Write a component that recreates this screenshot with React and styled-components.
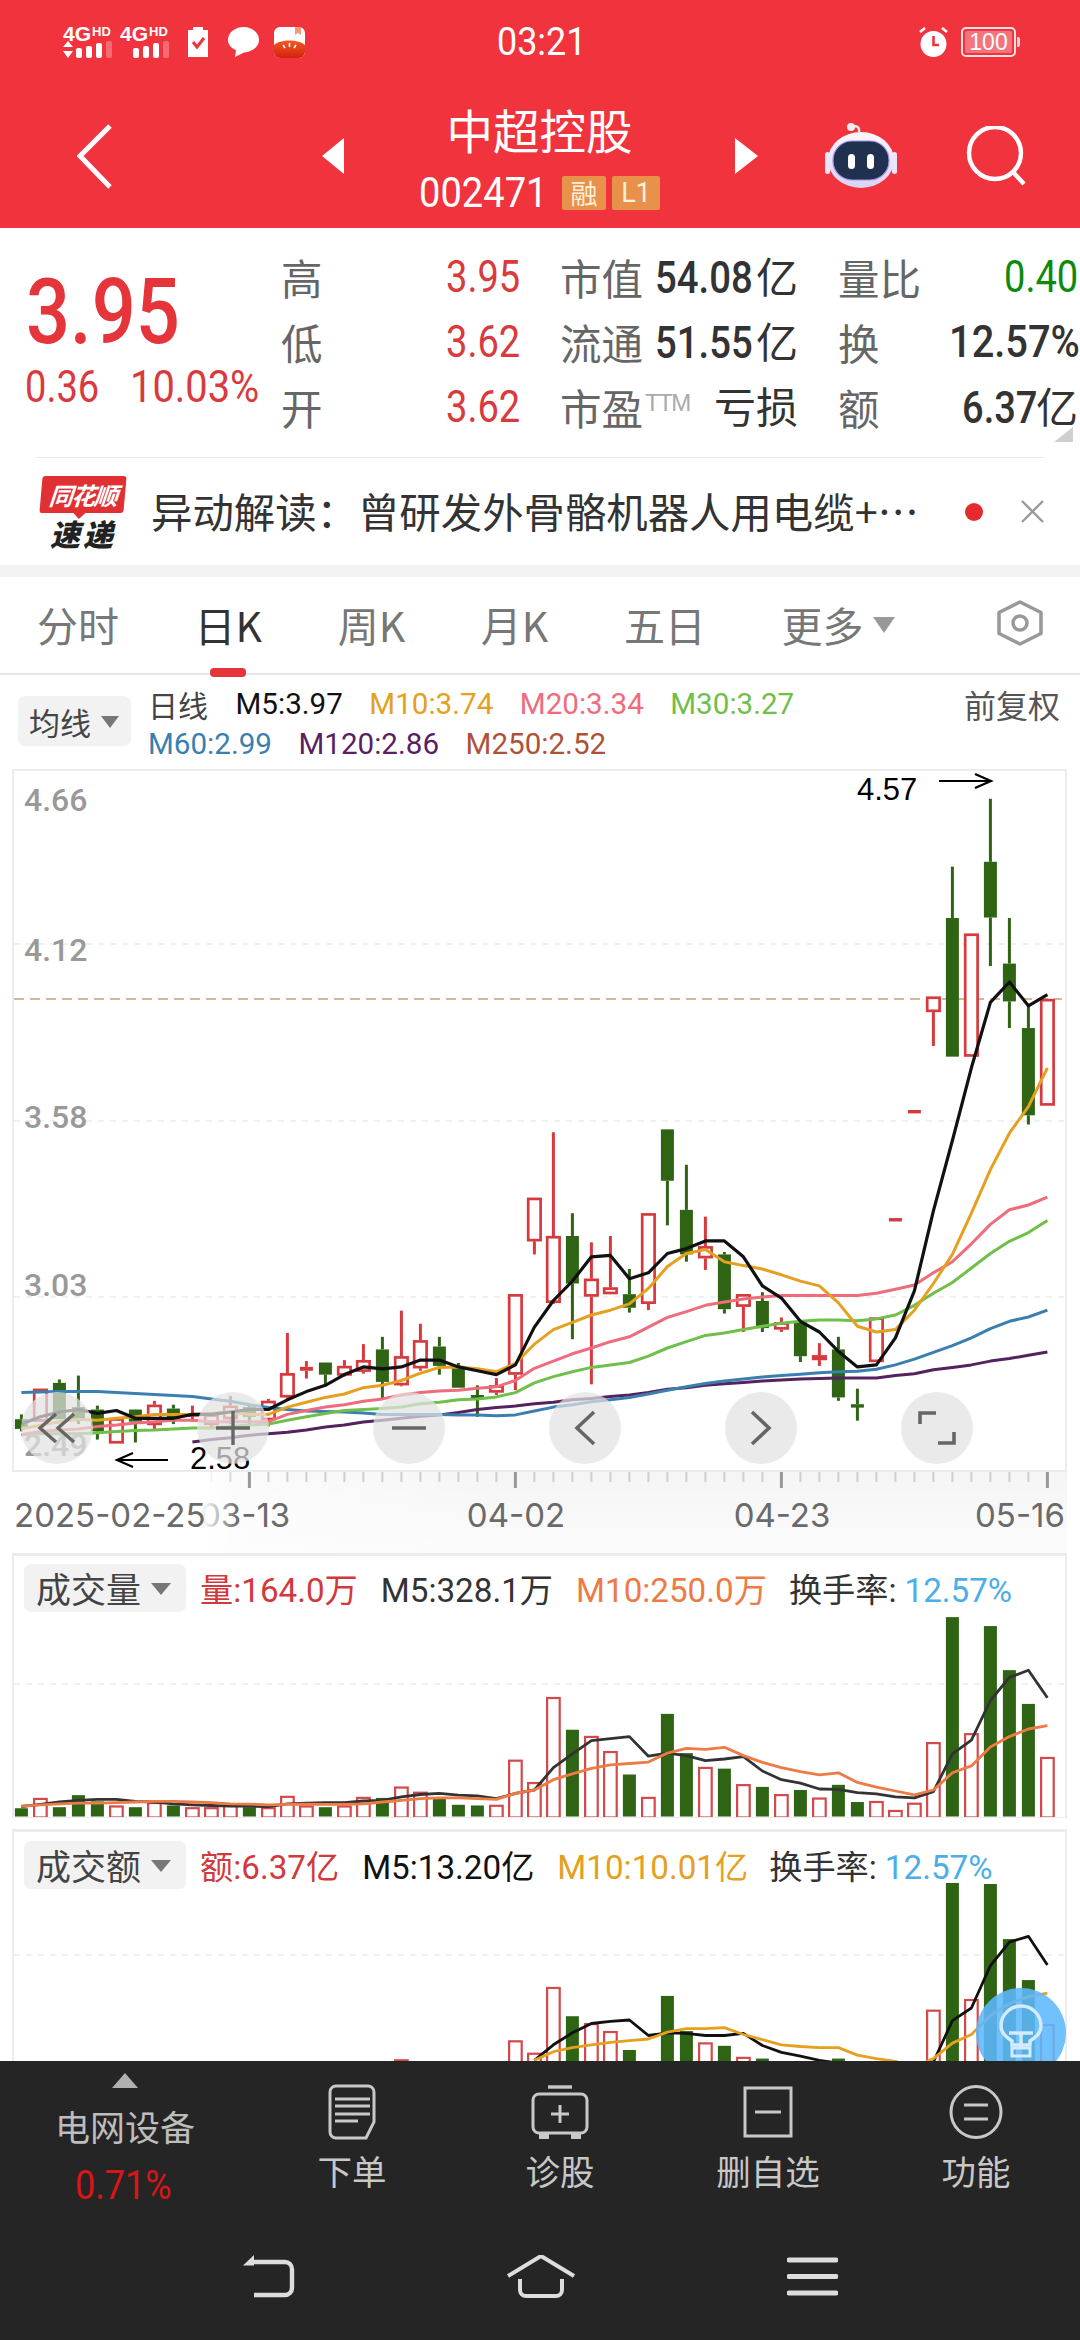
import React from "react";
import styled, { createGlobalStyle } from "styled-components";

const SANS = `"Roboto","Noto Sans CJK SC",sans-serif`;
const CJK = `"Noto Sans CJK SC",sans-serif`;
const RED = "#f0333d";

const Global = createGlobalStyle`
  html, body { margin: 0; padding: 0; background: #fff; }
  body { font-family: ${SANS}; }
  * { box-sizing: border-box; }
`;

const Page = styled.div`
  width: 1080px; height: 2340px; overflow: hidden; position: relative;
  display: flex; flex-direction: column; background: #fff;
`;
/* condensed digits: the layout box has the target width, the glyphs are squeezed into it */
const Sq = styled.span`
  display: inline-block; width: ${p => p.$w}px; white-space: nowrap; text-align: left;
  transform: scaleX(${p => p.$s}); transform-origin: left center;
`;
const Unit = styled.span`font-family: ${CJK}; font-size: 42px; font-weight: 400;`;

const Header = styled.header`
  height: 228px; background: ${RED}; color: #fff; flex: none;
  display: flex; flex-direction: column;
`;
const StatusBar = styled.div`
  height: 84px; display: grid; grid-template-columns: 1fr auto 1fr; align-items: center;
  padding: 0 60px 0 63px;
`;
const StatusLeft = styled.div`display: flex; align-items: center; gap: 0;`;
const StatusRight = styled.div`display: flex; align-items: center; justify-content: flex-end; gap: 13px;`;
const Clock = styled.div`font-size: 39px; line-height: 44px; margin-top: -1px;`;
const Net = styled.div`
  width: 57px; height: 32px; display: flex; flex-direction: column; font-weight: 700;
`;
const NetTop = styled.div`display: flex; height: 15px; line-height: 15px; font-size: 21px; font-family: "Liberation Sans",sans-serif;`;
const Hd = styled.span`font-size: 13px; line-height: 11px; margin-left: 1px;`;
const StatusGlyph = styled.svg`display: block; flex: none; margin-left: ${p => p.$ml || 0}px;`;

const TitleBar = styled.div`flex: 1; display: flex; align-items: center; padding-left: 77px;`;
const Icon = styled.svg`display: block; flex: none; margin-left: ${p => p.$ml || 0}px;`;
const TitleBlock = styled.div`width: 391px; flex: none; display: flex; flex-direction: column; align-items: center; gap: 21px;`;
const Title = styled.div`font-size: 46.5px; line-height: 52px; font-family: ${CJK};`;
const CodeRow = styled.div`display: flex; align-items: center; height: 34px;`;
const Code = styled.span`font-size: 42px; line-height: 34px; margin-right: 15px;`;
const Badge = styled.span`
  height: 34px; width: ${p => p.$w}px; margin-right: 6px; background: #e8914a; border-radius: 2px;
  display: flex; align-items: center; justify-content: center; font-size: ${p => p.$fs}px; color: #fdf1dd;
  &:last-child { margin-right: 0; }
`;

const Info = styled.section`
  height: 230px; flex: none; position: relative; display: flex; padding-top: 16px;
  &::after { content: ""; position: absolute; left: 36px; right: 36px; bottom: 0; height: 1px; background: #e9e9e9; }
`;
const Corner = styled.div`
  position: absolute; right: 7px; bottom: 16px; width: 0; height: 0;
  border-left: 19px solid transparent; border-bottom: 15px solid #cfcfcf;
`;
const PriceBlock = styled.div`width: 281px; flex: none; padding-left: 25px; display: flex; flex-direction: column;`;
const BigPrice = styled.div`
  font-size: 91px; font-weight: 500; line-height: 88px; color: #e5343a; margin-top: 24px; padding-left: 1px;
`;
const Change = styled.div`
  display: flex; gap: 31px; font-size: 44px; line-height: 44px; color: #d93a3e; margin-top: 9px;
`;
const Table = styled.div`
  flex: none; width: 797px; display: grid; grid-template-columns: 60px 179px 135px 143px 127px 153px; grid-auto-rows: 65px; align-items: center;
`;
const Label = styled.div`
  font-size: 41.5px; color: #666; font-family: ${CJK}; white-space: nowrap;
  padding-left: ${p => p.$pl || 0}px; line-height: 50px;
`;
const Sup = styled.sup`font-family: "Liberation Sans",sans-serif; font-size: 24px; line-height: 0; vertical-align: 14px; color: #aaa; margin-left: 2px; letter-spacing: -1.5px;`;
const Value = styled.div`
  font-size: 44px; font-weight: ${p => p.$fw || 400}; color: ${p => p.$c || "#333"}; text-align: right; line-height: 50px; white-space: nowrap;
`;

const News = styled.div`height: 107px; flex: none; display: flex; align-items: center; padding-left: 38px;`;
const Logo = styled.div`width: 90px; flex: none; display: flex; flex-direction: column; align-items: center; margin-top: 0;`;
const LogoBubble = styled.div`
  position: relative; width: 84px; height: 37px; background: #e03034; border-radius: 3px; transform: skewX(-5deg);
  color: #fff; font: italic 700 24px/37px ${CJK}; text-align: center; letter-spacing: -1.5px;
  &::after { content: ""; position: absolute; left: 34px; bottom: -6px; border-left: 6px solid transparent; border-right: 6px solid transparent; border-top: 6px solid #e03034; }
`;
const LogoText = styled.div`font: italic 900 30px/30px ${CJK}; color: #222; margin-top: 5px; letter-spacing: 3px;`;
const NewsText = styled.div`
  font-family: ${CJK}; font-size: 41.4px; line-height: 52px; color: #333; margin-left: 23px; width: 780px; white-space: nowrap; margin-top: -3px;
`;
const Dot = styled.div`width: 18px; height: 18px; border-radius: 50%; background: #e62a2e; margin-left: 34px; flex: none;`;
const Separator = styled.div`height: 12px; flex: none; background: #f3f3f3;`;

const Tabs = styled.nav`
  height: 98px; flex: none; display: flex; align-items: center; gap: 75.6px; padding: 0 36px 0 37px; border-bottom: 2px solid #e6e6e6;
`;
const Tab = styled.div`
  position: relative; font-family: ${CJK}; font-size: 41px; line-height: 52px; color: ${p => p.$active ? "#333" : "#777"}; display: flex; align-items: center; margin-top: -3px;
  ${p => p.$active && `&::after { content: ""; position: absolute; left: 15px; bottom: -27px; width: 36px; height: 9px; background: #e5343a; border-radius: 4px; }`}
`;
const Caret = styled.span`
  width: 0; height: 0; margin-left: ${p => p.$ml || 10}px; margin-top: ${p => p.$mt || 2}px;
  border-left: ${p => p.$w}px solid transparent; border-right: ${p => p.$w}px solid transparent; border-top: ${p => p.$h}px solid ${p => p.$c || "#999"};
`;
const Gear = styled.svg`display: block; margin-left: auto; flex: none; margin-top: -4px;`;

const Indicators = styled.div`height: 94px; flex: none; display: flex; padding: 21px 20px 0 18px;`;
const Select = styled.div`
  height: ${p => p.$h}px; width: ${p => p.$wd}px; flex: none; background: #f2f2f2; border-radius: 7px; display: flex; align-items: center;
  padding-left: ${p => p.$pl}px; font-family: ${CJK}; font-size: ${p => p.$fs}px; color: #444;
`;
const LegendCol = styled.div`flex: 1; margin-left: 17px; margin-top: -12px; display: flex; flex-direction: column;`;
const LegendLine = styled.div`height: 40px; display: flex; align-items: center; gap: 26.5px; font-size: 29.6px;`;
const Ma = styled.span`color: ${p => p.$c}; white-space: nowrap; ${p => p.$cjk && `font-size: 30px; font-family: ${CJK}; color:#444; margin-right:1px;`}`;
const Adjust = styled.span`margin-left: auto; font-family: ${CJK}; font-size: 32px; color: #555;`;

const ChartFrame = styled.div`
  height: 703px; flex: none; margin: 0 13px 0 12px; border: 2px solid #ececec; position: relative; background:#fff;
`;
const ChartSvg = styled.svg`display: block; overflow: visible;`;
const Fabs = styled.div`position: absolute; left: 7px; top: 621px; display: flex; gap: 104px;`;
const Fab = styled.div`
  width: 72px; height: 72px; border-radius: 50%; background: rgba(226,226,226,.72); display: flex; align-items: center; justify-content: center;
`;
const Axis = styled.div`
  height: 81px; flex: none; margin: 0 13px 0 12px; background: #f5f5f5;
`;
const Panel = styled.div`
  height: ${p => p.$h}px; flex: none; position: relative; overflow: hidden; margin: 0 13px 0 12px; background: #fff;
  border: 2px solid #ececec; border-top-width: 3px; ${p => p.$open ? "border-bottom: 0;" : "border-bottom-width: 1px;"} margin-top: ${p => p.$mt || 0}px;
`;
const PanelLegend = styled.div`
  position: absolute; left: 10px; top: ${p => p.$top}px; display: flex; align-items: center; font-size: 33.2px; white-space: nowrap;
`;
const LegendItem = styled.span`
  color: ${p => p.$c}; margin-left: ${p => p.$ml}px; font-family: ${SANS};
`;

const Bottom = styled.footer`
  position: relative; z-index: 2; flex: none; height: 279px; background: #252525; color: #c8c8c8; display: flex; flex-direction: column;
`;
const BottomTop = styled.div`height: 194px; display: grid; grid-template-columns: 248px repeat(4, 208px);`;
const Sector = styled.div`display: flex; flex-direction: column; align-items: center; padding-top: 12px; padding-left: 2px;`;
const Up = styled.div`width: 0; height: 0; border-left: 13px solid transparent; border-right: 13px solid transparent; border-bottom: 15px solid #b0b0b0;`;
const SectorName = styled.div`font-family: ${CJK}; font-size: 35px; line-height: 44px; margin-top: 16px; color: #bdbdbd;`;
const SectorPct = styled.div`font-size: 40px; line-height: 44px; margin-top: 16px; color: #d81616;`;
const Action = styled.div`display: flex; flex-direction: column; align-items: center; padding-top: 23px;`;
const ActionLabel = styled.div`font-family: ${CJK}; font-size: 34.5px; line-height: 44px; margin-top: 8px;`;
const SysNav = styled.div`display: flex; gap: 211px; padding-left: 243px; align-items: center; height: 43px;`;
const Bulb = styled.svg`position: absolute; left: 976px; top: 1988px; z-index: 1;`;

const X = i => 21.4 + 19 * i;
const Y = v => 760 + v / 2.063;
const VY = v => 1530 + v / 2.904;

const G = "#2f6414", R = "#d63a3e";
const candles = [
  [G,1350,1360,1380,1385],[R,1297,1297,1365,1365],[G,1278,1285,1360,1360],[G,1270,1335,1360,1370],[G,1332,1340,1385,1402],
  [R,1358,1358,1410,1410],[G,1340,1340,1365,1408],[R,1322,1330,1372,1380],[G,1330,1338,1360,1370],[R,1332,1348,1352,1365],
  [R,1345,1350,1372,1380],[R,1312,1332,1360,1370],[G,1330,1335,1355,1370],[R,1318,1322,1362,1375],[R,1182,1265,1315,1320],
  [R,1240,1252,1260,1276],[G,1243,1243,1268,1292],[R,1238,1250,1270,1272],[R,1205,1238,1262,1266],[G,1190,1216,1283,1318],
  [R,1136,1230,1290,1292],[R,1163,1197,1255,1260],[G,1190,1210,1250,1268],[G,1244,1250,1295,1295],[G,1290,1310,1313,1355],
  [R,1275,1290,1305,1310],[R,1102,1102,1268,1300],[R,903,903,993,1020],[R,768,982,1120,1122],[G,935,982,1080,1195],
  [R,995,1070,1107,1288],[R,982,1088,1102,1102],[G,1050,1102,1130,1140],[R,935,935,1122,1135],[G,762,762,868,960],
  [G,835,928,1020,1035],[R,942,1003,1028,1052],[G,1015,1020,1133,1142],[R,1102,1102,1128,1180],[G,1098,1116,1172,1180],
  [R,1150,1160,1175,1180],[G,1160,1160,1230,1242],[R,1203,1228,1238,1250],[G,1190,1216,1315,1322],[G,1297,1329,1333,1363],
  [R,1150,1150,1242,1242],[R,945,945,952,952],[R,722,722,729,729],[R,488,488,520,590],[G,220,326,612,612],
  [R,358,358,612,612],[G,80,210,325,425],[G,326,420,498,553],[G,505,553,733,752],[R,493,493,713,713],
];
const m5 = [1370,1355,1345,1340,1348,1342,1358,1358,1358,1350,1350,1345,1340,1340,1320,1303,1290,1268,1252,1256,1252,1238,1238,1252,1260,1268,1248,1170,1115,1075,1025,1022,1070,1058,1018,1008,992,992,1025,1085,1110,1158,1180,1220,1252,1248,1192,1095,930,785,635,500,458,507,484];
const m10 = [1380,1372,1365,1360,1362,1358,1355,1350,1350,1350,1348,1345,1350,1350,1335,1325,1315,1308,1295,1290,1280,1265,1253,1252,1256,1262,1245,1205,1175,1160,1145,1135,1122,1090,1045,1018,1010,1035,1043,1050,1062,1075,1085,1120,1168,1180,1175,1135,1080,1020,935,845,770,715,635];
const m20 = [1392,1385,1382,1380,1375,1372,1368,1365,1362,1362,1365,1365,1365,1365,1350,1342,1335,1330,1323,1318,1310,1305,1302,1300,1296,1293,1280,1255,1240,1225,1213,1200,1190,1170,1150,1138,1125,1118,1112,1108,1105,1105,1105,1105,1105,1100,1092,1083,1058,1035,998,958,928,918,902];
const m30 = [1392,1390,1390,1390,1388,1385,1383,1382,1380,1378,1378,1375,1372,1370,1362,1355,1348,1342,1340,1338,1335,1328,1325,1320,1318,1314,1305,1285,1272,1262,1253,1248,1243,1230,1213,1200,1187,1182,1175,1168,1162,1158,1155,1155,1157,1153,1145,1125,1100,1078,1048,1018,993,975,950];
const m60 = [1305,1304,1303,1303,1303,1305,1307,1309,1311,1313,1318,1323,1330,1336,1340,1343,1344,1345,1347,1350,1350,1350,1350,1351,1351,1353,1351,1343,1335,1330,1324,1320,1315,1308,1300,1293,1286,1281,1277,1273,1270,1267,1264,1262,1261,1257,1248,1236,1222,1208,1192,1173,1158,1149,1135];
const m120 = [null,null,null,null,null,null,null,null,null,1407,1402,1398,1393,1390,1387,1382,1376,1372,1366,1362,1358,1354,1351,1346,1340,1336,1333,1328,1325,1320,1317,1313,1310,1305,1298,1295,1290,1287,1284,1281,1279,1277,1276,1275,1275,1275,1270,1266,1258,1253,1248,1240,1235,1228,1221];

const volTops = [808,778,805,770,788,800,805,790,800,805,805,798,805,805,772,800,805,800,775,778,745,760,780,798,800,798,667,732,485,580,598,642,710,775,534,648,688,693,738,746,767,755,777,740,790,787,813,792,616,253,590,279,407,505,659];
const volM5 = [803,797,790,785,782,782,788,790,795,798,800,802,802,803,795,793,792,792,787,785,775,768,765,770,772,780,765,755,690,650,612,606,600,657,648,655,670,665,658,700,725,735,752,753,763,766,775,778,760,650,610,495,428,407,487];
const volM10 = [802,798,795,793,793,792,790,788,788,790,792,795,796,798,797,796,797,797,795,790,785,780,778,778,780,782,765,755,725,708,692,682,678,674,648,634,637,631,655,675,690,702,711,705,733,747,758,769,755,705,685,630,600,578,568];
const amtTops = { 20: 1537, 26: 1482, 27: 1518, 28: 1327, 29: 1412, 30: 1432, 31: 1455, 32: 1510, 34: 1353, 35: 1455, 36: 1488, 37: 1498, 38: 1530, 39: 1535, 43: 1535, 48: 1393, 49: 1025, 50: 1362, 51: 1028, 52: 1188, 53: 1307, 54: 1435 };
const amtM5 = { 27:1540,28:1495,29:1460,30:1433,31:1427,32:1423,33:1468,34:1460,35:1462,36:1468,37:1468,38:1462,39:1497,40:1517,41:1528,42:1540,43:1548,44:1560,45:1570,46:1580,47:1570,48:1545,49:1425,50:1388,51:1265,52:1197,53:1180,54:1263 };
const amtM10 = { 27:1540,28:1515,29:1503,30:1495,31:1488,32:1483,33:1478,34:1458,35:1448,36:1448,37:1445,38:1465,39:1480,40:1495,41:1500,42:1503,43:1503,44:1525,45:1535,46:1543,47:1560,48:1535,49:1490,50:1465,51:1410,52:1375,53:1355,54:1345 };

const pts = (arr, map) => arr.map((v, i) => (v == null ? null : `${X(i).toFixed(1)},${map(v).toFixed(1)}`)).filter(Boolean).join(" ");
const ptsObj = (obj, map) => Object.entries(obj).map(([i, v]) => `${X(+i).toFixed(1)},${map(v).toFixed(1)}`).join(" ");

function Candle({ i, d }) {
  const [c, wt, bt, bb, wb] = d;
  const x = X(i);
  const top = Y(bt), bot = Y(bb);
  const solid = c === G || bb - bt < 10;
  return (
    <g>
      {wt < bt && <line x1={x} x2={x} y1={Y(wt)} y2={top} stroke={c} strokeWidth="3" />}
      {wb > bb && <line x1={x} x2={x} y1={bot} y2={Y(wb)} stroke={c} strokeWidth="3" />}
      {solid
        ? <rect x={x - 6.5} y={top} width="13" height={Math.max(bot - top, 3.4)} fill={c} />
        : <rect x={x - 6.2} y={top + 1.2} width="12.4" height={bot - top - 2.4} fill="#fff" stroke={c} strokeWidth="2.7" />}
    </g>
  );
}

function VolBar({ i, top, base, color }) {
  const x = X(i);
  return color === G
    ? <rect x={x - 6.5} y={top} width="13" height={base - top} fill={G} />
    : <rect x={x - 6.3} y={top + 1} width="12.6" height={base - top} fill="#fff" stroke="#d3494c" strokeWidth="2.2" />;
}

const Line = ({ points, c, w = 3 }) => <polyline points={points} fill="none" stroke={c} strokeWidth={w} strokeLinejoin="round" />;

function MainChart() {
  return (
    <ChartSvg width="1051" height="699" viewBox="14 771 1051 699">
      {[944, 1121, 1297].map(y => <line key={y} x1="14" x2="1066" y1={y} y2={y} stroke="#e2e2e2" strokeWidth="1.2" strokeDasharray="6 6" />)}
      <line x1="14" x2="1062" y1="999" y2="999" stroke="#c6a377" strokeWidth="1.6" strokeDasharray="10 6" />
      {candles.map((d, i) => <Candle key={i} i={i} d={d} />)}
      <Line points={pts(m120, Y)} c="#54225f" />
      <Line points={pts(m60, Y)} c="#3a7fb0" />
      <Line points={pts(m30, Y)} c="#6fbf4a" />
      <Line points={pts(m20, Y)} c="#ee6c7c" />
      <Line points={pts(m10, Y)} c="#e5a020" />
      <Line points={pts(m5, Y)} c="#111" w="3.2" />
      <g fontFamily="Roboto,sans-serif" fontWeight="500" fontSize="32" fill="#999">
        <text x="24" y="811">4.66</text>
        <text x="24" y="961">4.12</text>
        <text x="24" y="1128">3.58</text>
        <text x="24" y="1296">3.03</text>
        <text x="24" y="1456">2.49</text>
      </g>
      <g fontFamily="'Liberation Sans',sans-serif" fontSize="31" fill="#000">
        <text x="857" y="800">4.57</text>
        <text x="190" y="1469">2.58</text>
      </g>
      <path d="M939 781H990M975 774L991 781L975 788" fill="none" stroke="#000" strokeWidth="2.2" />
      <path d="M168 1460H117M133 1453L117 1460L133 1467" fill="none" stroke="#000" strokeWidth="2.2" />
    </ChartSvg>
  );
}

const fabIcons = [
  <svg key="a" width="40" height="30" viewBox="0 0 40 30"><path d="M19 1L3 15L19 29M37 1L21 15L37 29" fill="none" stroke="#666" strokeWidth="3.4" /></svg>,
  <svg key="b" width="34" height="34" viewBox="0 0 34 34"><path d="M0 17H34M17 0V34" fill="none" stroke="#666" strokeWidth="3.4" /></svg>,
  <svg key="c" width="34" height="6" viewBox="0 0 34 6"><path d="M0 3H34" fill="none" stroke="#666" strokeWidth="3.4" /></svg>,
  <svg key="d" width="22" height="36" viewBox="0 0 22 36"><path d="M20 2L3 18L20 34" fill="none" stroke="#666" strokeWidth="3.6" /></svg>,
  <svg key="e" width="22" height="36" viewBox="0 0 22 36"><path d="M2 2L19 18L2 34" fill="none" stroke="#666" strokeWidth="3.6" /></svg>,
  <svg key="f" width="38" height="36" viewBox="0 0 38 36"><path d="M2 14V3H18M36 22V33H20" fill="none" stroke="#666" strokeWidth="3.6" /></svg>,
];

function AxisSvg() {
  const ticks = [];
  for (let i = 10; i <= 54; i++) {
    const major = [12, 26, 40, 54].includes(i);
    ticks.push(<line key={i} x1={X(i)} x2={X(i)} y1="1472" y2={major ? 1488 : 1482} stroke={major ? "#999" : "#cfcfcf"} strokeWidth={major ? 3 : 2} />);
  }
  return (
    <ChartSvg width="1055" height="81" viewBox="12 1472 1055 81">
      <defs>
        <linearGradient id="soft" gradientUnits="userSpaceOnUse" x1="12" x2="520" y1="0" y2="0">
          <stop offset="0" stopColor="#fff" />
          <stop offset="1" stopColor="#fff" stopOpacity="0" />
        </linearGradient>
        <linearGradient id="fade" gradientUnits="userSpaceOnUse" x1="12" x2="238" y1="0" y2="0">
          <stop offset="0" stopColor="#fff" stopOpacity=".92" />
          <stop offset="0.86" stopColor="#fff" stopOpacity=".9" />
          <stop offset="1" stopColor="#fff" stopOpacity="0" />
        </linearGradient>
        <linearGradient id="down" x1="0" x2="0" y1="0" y2="1">
          <stop offset="0" stopColor="#fff" stopOpacity="0" />
          <stop offset="1" stopColor="#fff" stopOpacity=".65" />
        </linearGradient>
      </defs>
      <rect x="12" y="1472" width="1055" height="81" fill="url(#down)" />
      <rect x="12" y="1472" width="508" height="81" fill="url(#soft)" />
      {ticks}
      <g fontFamily="Inter,sans-serif" fontSize="33" fill="#6a6a6a">
        <text x="200" y="1527">03-13</text>
        <rect x="12" y="1472" width="226" height="81" fill="url(#fade)" />
        <text x="14" y="1527">2025-02-25</text>
        <text x="516" y="1527" textAnchor="middle">04-02</text>
        <text x="782" y="1527" textAnchor="middle">04-23</text>
        <text x="1065" y="1527" textAnchor="end">05-16</text>
      </g>
    </ChartSvg>
  );
}

function VolumeSvg() {
  const base = VY(832);
  return (
    <ChartSvg width="1051" height="261" viewBox="14 1556 1051 261">
      <line x1="14" x2="1066" y1="1684" y2="1684" stroke="#e2e2e2" strokeWidth="1.2" strokeDasharray="6 6" />
      {volTops.map((t, i) => <VolBar key={i} i={i} top={VY(t)} base={base} color={candles[i][0]} />)}
      <Line points={pts(volM5, VY)} c="#333" w="2.8" />
      <Line points={pts(volM10, VY)} c="#ee7a45" w="2.8" />
    </ChartSvg>
  );
}

function AmountSvg() {
  return (
    <ChartSvg width="1051" height="229" viewBox="14 1832 1051 229">
      <line x1="14" x2="1066" y1="1955" y2="1955" stroke="#e2e2e2" strokeWidth="1.2" strokeDasharray="6 6" />
      {Object.entries(amtTops).map(([i, t]) => <VolBar key={i} i={+i} top={VY(t)} base={2090} color={candles[+i][0]} />)}
      <Line points={ptsObj(amtM5, VY)} c="#111" w="2.8" />
      <Line points={ptsObj(amtM10, VY)} c="#e5a020" w="2.8" />
    </ChartSvg>
  );
}

const SignalSvg = styled.svg`display: block;`;
function Signal({ arrows }) {
  return (
    <SignalSvg width="57" height="17" viewBox="0 0 57 17">
      {arrows && <path d="M5 0L10 6H0ZM5 17L0 10H10Z" fill="#fff" />}
      <rect x="13" y="7" width="6" height="10" rx="2" fill="#fff" />
      <rect x="23" y="5" width="6" height="12" rx="2" fill="#fff" />
      <rect x="33" y="2" width="6" height="15" rx="2" fill="#fff" />
      <rect x="43" y="0" width="6" height="17" rx="2" fill="#fff" opacity=".28" />
    </SignalSvg>
  );
}

const BatteryBox = styled.div`
  width: 55px; height: 30px; border: 2px solid rgba(255,255,255,.85); border-radius: 5px; padding: 2px; position: relative; margin-right: 4px;
  &::after { content: ""; position: absolute; right: -6px; top: 8px; width: 3px; height: 10px; background: rgba(255,255,255,.8); border-radius: 0 2px 2px 0; }
`;
const BatteryFill = styled.div`
  width: 100%; height: 100%; background: rgba(255,255,255,.32); border-radius: 2px; color: #fff; font-size: 23px; line-height: 22px; text-align: center; font-family: "Liberation Sans",sans-serif;
`;

export default function App() {
  return (
    <Page>
      <Global />
      <Header>
        <StatusBar>
          <StatusLeft>
            <Net><NetTop>4G<Hd>HD</Hd></NetTop><Signal arrows /></Net>
            <Net><NetTop>4G<Hd>HD</Hd></NetTop><Signal /></Net>
            <StatusGlyph $ml="10" width="22" height="30" viewBox="0 0 22 30">
              <path d="M1 3H6V0H16V3H21V30H1Z" fill="#fff" />
              <path d="M6 15L10 20L17 11" fill="none" stroke={RED} strokeWidth="3" />
            </StatusGlyph>
            <StatusGlyph $ml="19" width="31" height="30" viewBox="0 0 31 30">
              <path d="M15.5 0C24 0 31 5.5 31 13C31 20 24 25 16 25.5L7 30L8 23C3 21 0 17.5 0 13C0 5.5 7 0 15.5 0Z" fill="#fff" />
            </StatusGlyph>
            <StatusGlyph $ml="15" width="31" height="31" viewBox="0 0 31 31">
              <defs><linearGradient id="ap" x1="0" x2="0" y1="0" y2="1"><stop offset="0" stopColor="#f05a20" /><stop offset="1" stopColor="#d5200f" /></linearGradient></defs>
              <rect width="31" height="31" rx="6" fill="#fff" />
              <path d="M0 18C6 12 25 12 31 18V25a6 6 0 0 1 -6 6H6a6 6 0 0 1 -6 -6Z" fill="url(#ap)" />
              <path d="M21 0H27V8L24 6L21 8Z" fill="#f39a7a" />
              <path d="M15.5 16V20M9 18L11 21M22 18L20 21" stroke="#fff" strokeWidth="1.6" />
            </StatusGlyph>
          </StatusLeft>
          <Clock><Sq $w="90" $s=".92">03:21</Sq></Clock>
          <StatusRight>
            <StatusGlyph width="29" height="30" viewBox="0 0 29 30">
              <circle cx="14.5" cy="17" r="13" fill="#fff" />
              <path d="M1 5L6 1M28 5L23 1" stroke="#fff" strokeWidth="2.6" />
              <path d="M14.5 9V18H20" fill="none" stroke={RED} strokeWidth="2.6" />
            </StatusGlyph>
            <BatteryBox><BatteryFill>100</BatteryFill></BatteryBox>
          </StatusRight>
        </StatusBar>
        <TitleBar>
          <Icon width="35" height="65" viewBox="0 0 35 65"><path d="M33 2L3 32L33 63" fill="none" stroke="#fff" strokeWidth="5" /></Icon>
          <Icon $ml="210" width="22" height="36" viewBox="0 0 22 36"><path d="M22 0V36L0 18Z" fill="#fff" /></Icon>
          <TitleBlock>
            <Title>中超控股</Title>
            <CodeRow>
              <Code><Sq $w="128" $s=".907">002471</Sq></Code>
              <Badge $w="44" $fs="27">融</Badge>
              <Badge $w="48" $fs="27">L1</Badge>
            </CodeRow>
          </TitleBlock>
          <Icon width="23" height="36" viewBox="0 0 23 36"><path d="M0 0V36L23 18Z" fill="#fff" /></Icon>
          <Icon $ml="67" width="72" height="66" viewBox="0 0 72 66">
            <defs><linearGradient id="hd" x1="0" x2="0" y1="0" y2="1"><stop offset="0" stopColor="#fbf8ff" /><stop offset="1" stopColor="#d9d3f5" /></linearGradient></defs>
            <path d="M34 9C35 3 31 3 27 3" fill="none" stroke="#f3e6ee" strokeWidth="2.4" />
            <circle cx="26" cy="4" r="4" fill="#f6e9ef" />
            <rect x="0" y="29" width="5" height="22" rx="2.5" fill="#ebe6f7" />
            <rect x="67" y="29" width="5" height="22" rx="2.5" fill="#ebe6f7" />
            <ellipse cx="36" cy="37" rx="33" ry="28" fill="url(#hd)" />
            <rect x="8" y="18" width="56" height="39" rx="19" fill="#20304f" stroke="#a78ee8" strokeWidth="1.2" />
            <rect x="23" y="31" width="7" height="15" rx="3.5" fill="#fff" />
            <rect x="42" y="31" width="7" height="15" rx="3.5" fill="#fff" />
          </Icon>
          <Icon $ml="69" width="60" height="60" viewBox="0 0 60 60">
            <circle cx="29" cy="27" r="26" fill="none" stroke="#fff" strokeWidth="4.4" />
            <path d="M47 46L58 58" stroke="#fff" strokeWidth="4.4" />
          </Icon>
        </TitleBar>
      </Header>

      <Info>
        <PriceBlock>
          <BigPrice><Sq $w="151" $s=".853">3.95</Sq></BigPrice>
          <Change><Sq $w="74" $s=".865">0.36</Sq><Sq $w="129" $s=".905">10.03%</Sq></Change>
        </PriceBlock>
        <Table>
          <Label>高</Label><Value $c="#d93a3e"><Sq $w="74" $s=".865">3.95</Sq></Value><Label $pl="40">市值</Label><Value $fw="500"><Sq $w="101" $s=".87">54.08</Sq><Unit>亿</Unit></Value><Label $pl="40">量比</Label><Value $c="#0c8a0c"><Sq $w="74" $s=".865">0.40</Sq></Value>
          <Label>低</Label><Value $c="#d93a3e"><Sq $w="74" $s=".865">3.62</Sq></Value><Label $pl="40">流通</Label><Value $fw="500"><Sq $w="101" $s=".87">51.55</Sq><Unit>亿</Unit></Value><Label $pl="40">换</Label><Value $fw="500"><Sq $w="129" $s=".905">12.57%</Sq></Value>
          <Label>开</Label><Value $c="#d93a3e"><Sq $w="74" $s=".865">3.62</Sq></Value><Label $pl="40">市盈<Sup>TTM</Sup></Label><Value><Unit>亏损</Unit></Value><Label $pl="40">额</Label><Value $fw="500"><Sq $w="74" $s=".865">6.37</Sq><Unit>亿</Unit></Value>
        </Table>
        <Corner />
      </Info>

      <News>
        <Logo>
          <LogoBubble>同花顺</LogoBubble>
          <LogoText>速递</LogoText>
        </Logo>
        <NewsText>异动解读：曾研发外骨骼机器人用电缆+…</NewsText>
        <Dot />
        <Icon $ml="38" width="23" height="23" viewBox="0 0 23 23"><path d="M1 1L22 22M22 1L1 22" stroke="#999" strokeWidth="2.4" /></Icon>
      </News>
      <Separator />

      <Tabs>
        <Tab>分时</Tab>
        <Tab $active>日K</Tab>
        <Tab>周K</Tab>
        <Tab>月K</Tab>
        <Tab>五日</Tab>
        <Tab>更多<Caret $w="11" $h="16" /></Tab>
        <Gear width="48" height="46" viewBox="0 0 48 46">
          <path d="M24 2L45 12.5V33.5L24 44L3 33.5V12.5Z" fill="none" stroke="#999" strokeWidth="3.6" strokeLinejoin="round" />
          <circle cx="24" cy="23" r="7" fill="none" stroke="#999" strokeWidth="3.4" />
        </Gear>
      </Tabs>

      <Indicators>
        <Select $h="50" $wd="113" $pl="11" $fs="31">均线<Caret $w="9" $h="12" $c="#777" $ml="10" /></Select>
        <LegendCol>
          <LegendLine>
            <Ma $cjk>日线</Ma>
            <Ma $c="#111">M5:3.97</Ma>
            <Ma $c="#e5a020">M10:3.74</Ma>
            <Ma $c="#ee6c7c">M20:3.34</Ma>
            <Ma $c="#6fbf4a">M30:3.27</Ma>
            <Adjust>前复权</Adjust>
          </LegendLine>
          <LegendLine>
            <Ma $c="#3a7fb0">M60:2.99</Ma>
            <Ma $c="#5a1f62">M120:2.86</Ma>
            <Ma $c="#ad5238">M250:2.52</Ma>
          </LegendLine>
        </LegendCol>
      </Indicators>

      <ChartFrame>
        <MainChart />
        <Fabs>{fabIcons.map((ic, i) => <Fab key={i}>{ic}</Fab>)}</Fabs>
      </ChartFrame>
      <Axis><AxisSvg /></Axis>

      <Panel $h="265">
        <VolumeSvg />
        <PanelLegend $top="7">
          <Select $h="48" $wd="162" $pl="12" $fs="35">成交量<Caret $w="10" $h="12" $c="#777" $ml="10" /></Select>
          <LegendItem $c="#d2393c" $ml="14">量:164.0万</LegendItem>
          <LegendItem $c="#333" $ml="23">M5:328.1万</LegendItem>
          <LegendItem $c="#ee7a45" $ml="23">M10:250.0万</LegendItem>
          <LegendItem $c="#333" $ml="22">换手率:<LegendItem $c="#4baee8" $ml="8">12.57%</LegendItem></LegendItem>
        </PanelLegend>
      </Panel>
      <Panel $h="232" $open $mt="11">
        <AmountSvg />
        <PanelLegend $top="8">
          <Select $h="48" $wd="162" $pl="12" $fs="35">成交额<Caret $w="10" $h="12" $c="#777" $ml="10" /></Select>
          <LegendItem $c="#d2393c" $ml="14">额:6.37亿</LegendItem>
          <LegendItem $c="#111" $ml="23">M5:13.20亿</LegendItem>
          <LegendItem $c="#e5a020" $ml="23">M10:10.01亿</LegendItem>
          <LegendItem $c="#333" $ml="21">换手率:<LegendItem $c="#4baee8" $ml="8">12.57%</LegendItem></LegendItem>
        </PanelLegend>
      </Panel>

      <Bulb width="90" height="90" viewBox="0 0 90 90">
        <circle cx="45" cy="45" r="45" fill="#5db8ff" opacity=".88" />
        <path d="M36 57V53C30 49 25 45 25 38A20 20 0 1 1 65 38C65 45 60 49 54 53V57Z" fill="none" stroke="#d4ecff" strokeWidth="3.4" />
        <path d="M33 45H57M45 45V60" fill="none" stroke="#d4ecff" strokeWidth="3.4" />
        <rect x="36" y="60" width="18" height="8" fill="none" stroke="#d4ecff" strokeWidth="3" />
      </Bulb>

      <Bottom>
        <BottomTop>
          <Sector>
            <Up />
            <SectorName>电网设备</SectorName>
            <SectorPct><Sq $w="100" $s=".9">0.71%</Sq></SectorPct>
          </Sector>
          <Action>
            <Icon width="50" height="56" viewBox="0 0 50 56">
              <path d="M9 2H41a6 6 0 0 1 6 6V38L39 54H9a6 6 0 0 1 -6 -6V8a6 6 0 0 1 6 -6Z" fill="none" stroke="#c8c8c8" strokeWidth="3" />
              <path d="M8 15H43M8 22H43M8 30H43M8 37H31" stroke="#c8c8c8" strokeWidth="3" />
            </Icon>
            <ActionLabel>下单</ActionLabel>
          </Action>
          <Action>
            <Icon width="58" height="56" viewBox="0 0 58 56">
              <path d="M17 3H41" stroke="#c8c8c8" strokeWidth="3.4" />
              <rect x="2" y="10" width="54" height="39" rx="6" fill="none" stroke="#c8c8c8" strokeWidth="3" />
              <path d="M8 50H18V55H8ZM40 50H50V55H40Z" fill="#c8c8c8" />
              <path d="M20 30H38M29 21V39" stroke="#c8c8c8" strokeWidth="3" />
            </Icon>
            <ActionLabel>诊股</ActionLabel>
          </Action>
          <Action>
            <Icon width="50" height="56" viewBox="0 0 50 56">
              <rect x="2" y="4" width="46" height="48" fill="none" stroke="#c8c8c8" strokeWidth="3" />
              <path d="M12 28H38" stroke="#c8c8c8" strokeWidth="3" />
            </Icon>
            <ActionLabel>删自选</ActionLabel>
          </Action>
          <Action>
            <Icon width="54" height="56" viewBox="0 0 54 56">
              <ellipse cx="27" cy="28" rx="25" ry="25.5" fill="none" stroke="#c8c8c8" strokeWidth="3" />
              <path d="M15 21H39M15 35H39" stroke="#c8c8c8" strokeWidth="3" />
            </Icon>
            <ActionLabel>功能</ActionLabel>
          </Action>
        </BottomTop>
        <SysNav>
          <Icon width="52" height="43" viewBox="0 0 52 43">
            <path d="M11 0L0 10.5H11Z" fill="#ddd" />
            <path d="M10 7H42a7 7 0 0 1 7 7V33a7 7 0 0 1 -7 7H11" fill="none" stroke="#ddd" strokeWidth="4.4" />
          </Icon>
          <Icon width="70" height="43" viewBox="0 0 70 43">
            <path d="M2 21L35 1L68 21" fill="none" stroke="#ddd" strokeWidth="4" strokeLinejoin="round" />
            <path d="M14 24V35a6 6 0 0 0 6 6H50a6 6 0 0 0 6 -6V24" fill="none" stroke="#ddd" strokeWidth="4" />
          </Icon>
          <Icon width="51" height="43" viewBox="0 0 51 43">
            <path d="M2 5H49M2 21.5H49M2 38H49" stroke="#ddd" strokeWidth="5" strokeLinecap="round" />
          </Icon>
        </SysNav>
      </Bottom>
    </Page>
  );
}
